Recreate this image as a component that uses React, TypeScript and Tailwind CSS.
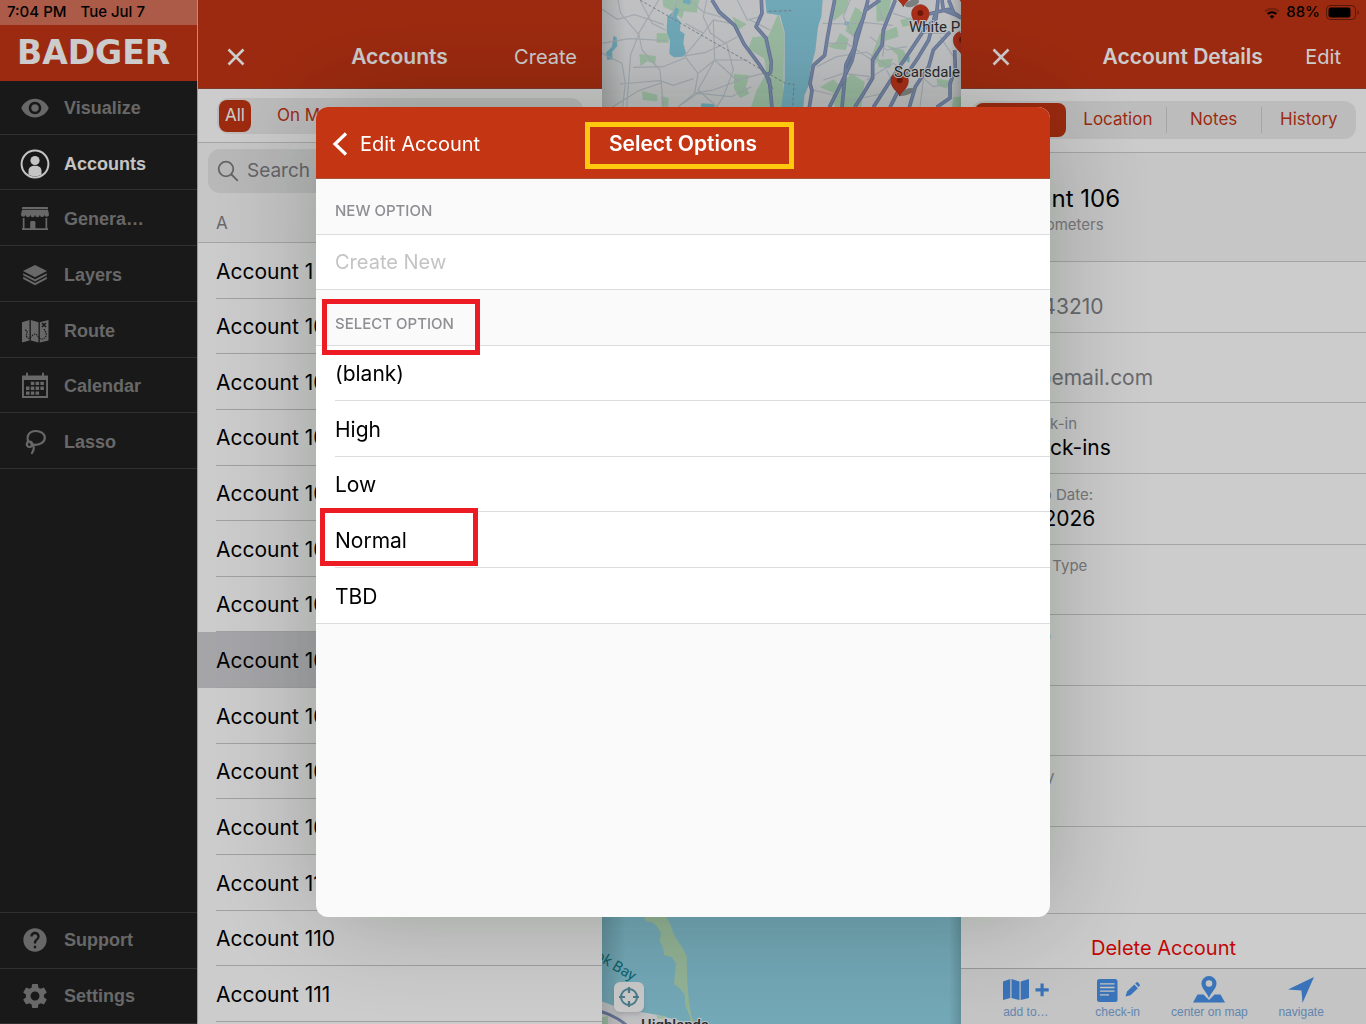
import React, { useState } from 'react';
import { clsx } from 'clsx';
import { MdHelp, MdSettings, MdVisibility } from 'react-icons/md';

type IconProps = { className?: string };

const PersonIcon = ({ className }: IconProps) => (
  <svg viewBox="0 0 30 30" className={className} fill="currentColor">
    <circle cx="15" cy="15" r="13.4" fill="none" stroke="currentColor" strokeWidth="2" />
    <circle cx="15" cy="11.5" r="4.6" />
    <path d="M8.5 25.500V22c0-3.400 2.600-5.200 6.500-5.200s6.500 1.800 6.500 5.200v3.500A12.500 12.500 0 0 1 8.500 25.500z" />
  </svg>
);

const StoreIcon = ({ className }: IconProps) => (
  <svg viewBox="0 0 30 30" className={className} fill="currentColor">
    <rect x="2" y="3" width="26" height="2.200" rx="0.500" />
    <path d="M2 6h26l1 4.300a2.300 2.300 0 0 1-4.600 0.500 2.300 2.300 0 0 1-4.600 0 2.300 2.300 0 0 1-4.800 0 2.300 2.300 0 0 1-4.700 0 2.300 2.300 0 0 1-4.700 0A2.300 2.300 0 0 1 1 10.300z" />
    <path d="M2.800 14h1.700v10.300h5.700v-5.800c0-1 .6-1.500 1.500-1.500h2.200c.9 0 1.500.5 1.500 1.500v5.800h10.100V14h1.700v10.300h0.800v1.700H2v-1.700h0.800z" />
  </svg>
);

const LayersIcon = ({ className }: IconProps) => (
  <svg viewBox="0 0 30 30" className={className} fill="currentColor">
    <path d="M15 5 27 11 15 17.300 3 11z" />
    <path d="M3.200 13.200 15 19.300l11.800-6.100v2.100L15 21.600 3.200 15.300z" />
    <path d="M3.200 16.800 15 23l11.800-6.200v2.100L15 25.200 3.200 18.900z" />
  </svg>
);

const RouteIcon = ({ className }: IconProps) => (
  <svg viewBox="0 0 30 30" className={className} fill="currentColor">
    <path d="M2 6.200 9.500 4v20.500L2 26.500zM10.800 4l7.700 2.300v20.200l-7.700-2zM19.800 6.300 28.500 4v20.500l-8.700 2z" />
    <g fill="none" stroke="#212121" strokeWidth="1.100">
      <path d="M5 14c4 .5 1 4 1.500 6s2.500 3.500 5 .5 4.500-3.500 6.500 0 6.500 3.500 8-.5c1-3-1-4.500-2-7" strokeDasharray="1.600 .8" />
      <path d="m22 7 4 4M26 7l-4 4" strokeWidth="1.600" />
    </g>
  </svg>
);

const CalendarIcon = ({ className }: IconProps) => (
  <svg viewBox="0 0 30 30" className={className} fill="currentColor">
    <path fillRule="evenodd" d="M2 4.500h26V27H2zM3.900 9v16.100h22.200V9z" />
    <rect x="6" y="1.500" width="2" height="4" rx="1" />
    <rect x="22" y="1.500" width="2" height="4" rx="1" />
    <path d="M10.800 10.800h3.500v3.300h-3.500zM15.600 10.800h3.500v3.300h-3.500zM20.400 10.800h3.500v3.300h-3.500zM6 15.600h3.500v3.300H6zM10.800 15.600h3.500v3.300h-3.500zM15.600 15.600h3.500v3.300h-3.500zM20.400 15.600h3.500v3.300h-3.500zM6 20.400h3.500v3.300H6zM10.800 20.400h3.500v3.300h-3.500zM15.600 20.400h3.500v3.300h-3.500z" />
  </svg>
);

const LassoIcon = ({ className }: IconProps) => (
  <svg viewBox="0 0 30 30" className={className} fill="none" stroke="currentColor" strokeWidth="2.200" strokeLinecap="round">
    <path d="M8.300 14.500C6 9 9.500 4 15.500 4c5.500 0 9.300 3 9.300 6.800 0 4.200-4.500 7-9.300 7-1.800 0-3.300-.4-4.500-1" />
    <circle cx="9.500" cy="17.300" r="2.700" />
    <path d="M13.200 18.800c1.200 2.200.4 4.700-1.200 7.200" />
  </svg>
);

const CloseIcon = () => (
  <svg viewBox="0 0 18 18" className="size-[18px]" fill="none" stroke="currentColor" strokeWidth="2.600">
    <path d="m1.500 1.500 15 15M16.500 1.500l-15 15" />
  </svg>
);

const topNav = [
  { label: 'Visualize', icon: MdVisibility },
  { label: 'Accounts', icon: PersonIcon },
  { label: 'Genera…', icon: StoreIcon },
  { label: 'Layers', icon: LayersIcon },
  { label: 'Route', icon: RouteIcon },
  { label: 'Calendar', icon: CalendarIcon },
  { label: 'Lasso', icon: LassoIcon },
];

const bottomNav = [
  { label: 'Support', icon: MdHelp },
  { label: 'Settings', icon: MdSettings },
];

const accounts = ['1', '100', '101', '102', '103', '104', '105', '106', '107', '108', '109', '11', '110', '111'];

const fields = [
  { label: 'Phone', value: '9876543210', muted: true },
  { label: 'Email', value: 'user1@email.com', muted: true },
  { label: 'Last Check-in', value: 'No check-ins' },
  { label: 'Follow-Up Date:', value: 'Jul 11, 2026' },
  { label: 'Customer Type', value: '' },
  { label: 'Client Info', value: '' },
  { label: 'Next Step', value: '' },
  { label: 'Status Key', value: '' },
];

const options = ['(blank)', 'High', 'Low', 'Normal', 'TBD'];

const NavItem = ({ label, icon: Icon, active }: { label: string; icon: React.ElementType; active?: boolean }) => (
  <li className="border-b border-[#3d3d3d]">
    <button className={clsx('flex h-full w-full items-center gap-3.5 pl-5 text-lg font-bold', active ? 'text-[#f5f5f5]' : 'text-[#828282]')}>
      <Icon className={clsx('size-[30px] shrink-0', Icon === MdHelp && 'p-px')} />
      {label}
    </button>
  </li>
);

const Sidebar = () => (
  <aside className="flex w-[197px] shrink-0 flex-col bg-[#202020] font-['Liberation_Sans',sans-serif]">
    <div className="relative z-10 h-[81px] shrink-0 bg-[#c43514]">
      <div className="flex h-[25px] items-center gap-3.5 bg-white/30 pl-[7px] font-['Inter',sans-serif] text-[15px] font-medium text-black">
        <span>7:04 PM</span>
        <span>Tue Jul 7</span>
      </div>
      <div className="pl-[17px] font-['DejaVu_Sans',sans-serif] text-[33px] leading-[56px] font-bold text-white">BADGER</div>
    </div>
    <ul className="-mt-0.5 grid h-[390px] shrink-0 grid-rows-7 *:pt-[3px]">
      {topNav.map((item) => (
        <NavItem key={item.label} {...item} active={item.label === 'Accounts'} />
      ))}
    </ul>
    <ul className="mt-auto grid h-28 shrink-0 grid-rows-2 border-t border-[#3d3d3d]">
      {bottomNav.map((item) => (
        <NavItem key={item.label} {...item} />
      ))}
    </ul>
  </aside>
);

const AccountList = () => {
  const [selected, setSelected] = useState('106');

  return (
    <section className="flex w-[405px] shrink-0 flex-col overflow-hidden border-l border-[#c0c0c0] bg-white">
      <header className="flex h-[89px] shrink-0 items-center justify-between border-b border-[#9c4a38] bg-[#c43514] pt-[26px] pr-[25px] pl-[29px] text-white">
        <button aria-label="Close" className="w-[70px]"><CloseIcon /></button>
        <h2 className="text-[21px] font-semibold">Accounts</h2>
        <button className="w-[75px] text-right text-xl">Create</button>
      </header>
      <div className="shrink-0 border-b border-[#cfcfcf] px-[19px] pt-[9px] pb-2">
        <div className="flex h-9 items-center rounded-xl bg-[#ececec] p-0.5 text-[17px] text-[#c43514]">
          <button className="h-8 w-8 rounded-lg bg-[#c43514] text-white">All</button>
          <button className="ml-[26px]">On Map</button>
        </div>
      </div>
      <div className="shrink-0 bg-[#f8f8f8]">
        <label className="mx-2.5 mt-1.5 flex h-11 items-center gap-2 rounded-xl bg-[#e6e6e7] pl-[9px] text-[#7f7f84]">
          <svg viewBox="0 0 22 22" className="size-[22px]" fill="none" stroke="currentColor" strokeWidth="1.800" strokeLinecap="round">
            <circle cx="9" cy="9" r="7.300" />
            <path d="m14.500 14.500 5.800 5.800" />
          </svg>
          <input type="search" aria-label="Search accounts" placeholder="Search Accounts" className="min-w-0 flex-1 bg-transparent text-[19px] outline-none placeholder:text-[#7f7f84]" />
        </label>
        <h3 className="mt-3 flex h-[38px] items-center border-b border-[#cfcfcf] pl-[18px] text-[17px] text-[#838387]">A</h3>
      </div>
      <ul className="grid h-[779px] shrink-0 grid-rows-14">
        {accounts.map((name) => (
          <li key={name} className={clsx('pl-[18px]', name === selected && 'bg-[#cfcfd3]')}>
            <button onClick={() => setSelected(name)} className="h-full w-full border-b border-[#c9c9cb] pt-0.5 text-left text-[21px]">
              Account {name}
            </button>
          </li>
        ))}
      </ul>
    </section>
  );
};

const MapPin = ({ x, y }: { x: number; y: number }) => (
  <g transform={`translate(${x} ${y})`}>
    <path d="M0 0c-4-14-26-22-26-46a26 26 0 0 1 52 0C26-22 4-14 0 0z" fill="#d43a1f" stroke="#b02a12" strokeWidth="2" />
    <circle cy="-47" r="9" fill="#8e1e0c" />
  </g>
);

const MapView = () => (
  <section className="relative min-w-0 flex-1 overflow-hidden bg-[#90d2e4]">
    <svg viewBox="0 0 359 1024" preserveAspectRatio="xMidYMid slice" className="h-full w-full font-['Roboto',sans-serif]">
      <rect width="359" height="500" fill="#f0f1f3" />
      <g transform="translate(-12 0) scale(.33333)">
        <g fill="#c0e8c8">
          <path d="M218 0h110l-8 38-38-4-6 22-30-24-26-12zM428 50l42 22-30 22zM565 40l18 60-4 222h-96l16-50 30-52-6-44-48-30 12-34 48-4z" />
          <path d="M200 100h36v28h-36zM148 162l50 6-2 24-24-8-20 14zM432 222l46 4-10 34 10 22-28 12-18-28zM156 274l46 10v20l-44-4zM214 288l22 6-2 28-20-4z" />
          <path d="M728 0h48l-8 34-38 30zM796 20l28 22-18 80-40-30zM858 0h46l-14 60-30 6zM712 138l26-12 12-26 26 16-8 34-34-4zM690 262l40-24 20 20 34-38 40 26-10 76h-80l-4-44zM840 180l30-80 50-20 6 30-52 16-10 60zM888 136l52 14 18 30-30 20-6-36zM862 180l46-4-8 28-34-4zM930 60l34-8 4 24-30 4zM1040 236l44 6-14 24-28-10zM1090 290h26v32h-30z" />
        </g>
        <g fill="#8cd2e6">
          <path d="M526 0h172l-4 50-10 30-8 72-16 60-2 40-14 32-4 38h-66l10-80V96l-14-50-40-6zM232 50l16-14 8-14 12 6-8 24 12 14-2 26 14 10-4 28 8 30-10 10-26 2-14-10 2-40-10-28zM280 0h24l-4 14-22-6zM70 108l10 4 2 26-16 18 2 22-16 2-4-22 18-18zM334 310l36 2 6 10h-44zM764 64l14 2-4 12-12-4zM950 168l10 2-2 18-8-4z" />
        </g>
        <g fill="none" stroke="#cbd4dc" strokeWidth="3.500">
          <path d="M36 28l46 30 52-14 88 30M36 130l80-14 114 6M36 160l60 30 10 60-8 72M84 0l8 40 54 64-24 60-12 158M150 0l36 70 40 20M206 0l-60 100 10 50 54 60 10 112M130 202l90-2 64-26M90 252l120-10 40 14 60-20M66 322l80-50 70-24" />
          <path d="M262 0l-20 60M286 70l54 30 30-40 52 10M340 100l-56 68 40 52-10 60-50 40M300 0l40 36 80 22M350 0l-10 50 22 50 44 30 36-20M284 168l60-10 66-30M370 60l4 120 100 0M324 220l50-40 66 60 80-20M374 180l-50 90 60 52M310 280l60-10 80-30M410 130l20 80-30 80-20 32M264 320l60-40 100 10 60-30" />
          <path d="M442 0l30 60 40-10M480 60l60 30M698 70l70 2 60-4 80 8M710 130l60 0 90 60M680 200l60-30 90-14 60 40M700 240l60-20 80 10M780 0l-20 50 30 60M868 30l20 50-10 90M840 110l50 40 60-10M910 40l60 20 30-30M830 240l80-50 60 40M890 210l40 80M1000 100l80 0M960 200l70 60 60-10M1000 240l-10 80M1050 110l40 60M670 270l120 30 90-20" />
        </g>
        <g fill="none" stroke="#7f90b8" strokeWidth="11" strokeLinejoin="round">
          <path d="M366 0l22 36 46 40 28 56 46 62 30 46 8 82M514 0l2 40-18 40 30 34 16 72-2 30-12 12 14 40" />
          <path d="M734 0l-12 60-10 54-8 52-34 30-10 54 6 22-8 50M834 0l-14 54-22 50-6 40-24 50-12 130M822 46l-22 76-14 60-38 80-30 60M916 0l-16 40-20 50-4 46-28 44v54l-26 44-28 44M870 0l-48 34" />
          <path d="M1000 94l-40 60-60 90-50 78M1036 40l-20 80-30 50-40 60-46 92M1080 96l-50 54-14 50-40 60-18 62M1094 150l2 60-16 40v44l-40 28M1044 0l-6 56-40 36M1056 0l4 30 40 16 14 8M1076 0l16 40M1016 42l60-14 40 26" />
        </g>
        <g fill="none" stroke="#90a4cb" strokeWidth="6" strokeLinejoin="round">
          <path d="M366 0l22 36 46 40 28 56 46 62 30 46 8 82M514 0l2 40-18 40 30 34 16 72-2 30-12 12 14 40" />
          <path d="M734 0l-12 60-10 54-8 52-34 30-10 54 6 22-8 50M834 0l-14 54-22 50-6 40-24 50-12 130M822 46l-22 76-14 60-38 80-30 60M916 0l-16 40-20 50-4 46-28 44v54l-26 44-28 44M870 0l-48 34" />
          <path d="M1000 94l-40 60-60 90-50 78M1036 40l-20 80-30 50-40 60-46 92M1080 96l-50 54-14 50-40 60-18 62M1094 150l2 60-16 40v44l-40 28M1044 0l-6 56-40 36M1056 0l4 30 40 16 14 8M1076 0l16 40M1016 42l60-14 40 26" />
        </g>
        <path d="M150 0l440 252h22l-4 70M536 34l68-2" fill="none" stroke="#8a9299" strokeWidth="2.500" strokeDasharray="9 6" />
        <ellipse cx="950" cy="276" rx="24" ry="9" fill="#9a9e9f" transform="rotate(-20 950 276)" />
        <ellipse cx="966" cy="10" rx="22" ry="10" fill="#9a9e9f" transform="rotate(-20 966 10)" />
        <MapPin x={940} y={20} />
        <MapPin x={991} y={86} />
        <MapPin x={1116} y={166} />
        <MapPin x={1116} y={10} />
        <MapPin x={929} y={288} />
      </g>
      <g fill="#2f3338" stroke="#f4f4f4" strokeWidth="2" paintOrder="stroke" fontSize="15">
        <text x="307" y="32">White Plains</text>
        <text x="292" y="77">Scarsdale</text>
      </g>
      <g transform="translate(-12 900) scale(.33333)">
        <path d="M162 48H228L242 76L252 104L276 142L290 168L292 250L297 305L304 345L312 368H300L301 352L286 318L284 284L268 264L252 252L258 190L246 172L222 166L220 146L210 124L212 98L200 78L184 66L166 64z" fill="#b8dfbb" />
        <path d="M30 302l50 18 60 14 60 10 60 16 50 12H30z" fill="#f0f1f3" />
        <path d="M36 352l18-4v24H36zM200 346l26 2 2 8-26 0z" fill="#c0e8c8" />
        <path d="M30 334q40 10 78 40" fill="none" stroke="#8090bb" strokeWidth="9" />
      </g>
      <text transform="translate(-15 954) rotate(31)" fontSize="15" fill="#157e8c">ook Bay</text>
      <text x="39" y="1030" fontSize="15" fontWeight="500" fill="#2f3338" stroke="#f4f4f4" strokeWidth="2" paintOrder="stroke">Highlands</text>
    </svg>
    <div className="absolute inset-y-0 left-0 w-6 bg-linear-to-r from-black/15 to-transparent" />
    <div className="absolute inset-y-0 right-0 w-3 bg-linear-to-l from-black/15 to-transparent" />
    <button aria-label="Center map" className="absolute bottom-3 left-3 flex size-[30px] items-center justify-center rounded-md bg-[#fafafa] text-[#5d99ad] shadow-md">
      <svg viewBox="0 0 20 20" className="size-5" fill="none" stroke="currentColor" strokeWidth="2">
        <circle cx="10" cy="10" r="8" />
        <path d="M10 0v6M10 14v6M0 10h6M14 10h6" strokeWidth="2.200" />
      </svg>
    </button>
  </section>
);

const StatusIcons = () => (
  <div className="flex h-[25px] items-center justify-end gap-1.5 pr-1.5 text-[15px] font-medium text-black">
    <svg viewBox="0 0 16 12" className="h-3 w-4" fill="none" stroke="currentColor" strokeWidth="2">
      <path d="M1 4.500a10 10 0 0 1 14 0" opacity=".25" />
      <path d="M3.600 7a6.300 6.300 0 0 1 8.800 0" />
      <path d="M8 11.800 5.700 9.300a3.400 3.400 0 0 1 4.600 0z" fill="currentColor" stroke="none" />
    </svg>
    <span>88%</span>
    <svg viewBox="0 0 34 15" className="h-[15px] w-[34px]">
      <rect x=".5" y=".5" width="29" height="14" rx="4" fill="none" stroke="#000" strokeOpacity=".45" />
      <rect x="2.500" y="2.500" width="22" height="10" rx="2.200" />
      <path d="M31.500 5.200v4.600c1.600-.8 1.600-3.800 0-4.600z" fillOpacity=".5" />
    </svg>
  </div>
);

const MapFold = () => (
  <path d="M0 4.500 7.300 2v19L0 23zM8.500 2l8 2.500V23l-8-2zM17.700 4.500 26 2v19l-8.300 2z" />
);

const toolbar = [
  {
    label: 'add to…',
    art: <svg viewBox="0 0 46 26" className="h-[26px] w-[46px]" fill="currentColor"><MapFold /><path d="M37.500 6.500h3.200v4.700h5v3.200h-5v4.800h-3.200v-4.800h-5v-3.200h5z" /></svg>,
  },
  {
    label: 'check-in',
    art: (
      <svg viewBox="0 0 44 26" className="h-[26px] w-11" fill="currentColor">
        <rect x="1" y="2" width="20.500" height="23" rx="2.500" />
        <path d="M4 6.800h14.500M4 10.500h14.500M4 14.200h14.500M4 17.900h9" stroke="#f5f5f5" strokeWidth="1.300" />
        <path d="M29.500 19.500 31 14.500l7.300-7 3.600 3.800-7.400 7zM39.200 6.500l1-.9c.7-.6 1.300-.5 1.900 0l1.400 1.600c.5.600.5 1.300 0 1.800l-.8.900z" />
      </svg>
    ),
  },
  {
    label: 'center on map',
    art: (
      <svg viewBox="0 0 32 27" className="h-[27px] w-8" fill="currentColor">
        <path fillRule="evenodd" d="M16 0a7.500 7.500 0 0 1 7.500 7.600c0 5-5 8.400-7.500 14.400-2.500-6-7.500-9.400-7.500-14.400A7.500 7.500 0 0 1 16 0zm0 4.200a3.300 3.300 0 1 0 0 6.600 3.300 3.300 0 0 0 0-6.600z" />
        <path d="M4.500 18.500h6l5.500 5.600 5.500-5.600h6l4.500 8H0z" />
      </svg>
    ),
  },
  {
    label: 'navigate',
    art: <svg viewBox="0 0 26 26" className="size-[26px]" fill="currentColor"><path d="M26 0 14.500 26l-1-12.500L0 12.500z" /></svg>,
  },
];

const AccountDetails = () => (
  <section className="flex w-[405px] shrink-0 flex-col bg-white">
    <header className="h-[89px] shrink-0 border-b border-[#9c4a38] bg-[#c43514] text-white">
      <StatusIcons />
      <div className="flex h-16 items-center justify-between pr-[25px] pl-[31px]">
        <button aria-label="Close"><CloseIcon /></button>
        <h2 className="pl-[50px] text-[21px] font-semibold">Account Details</h2>
        <button className="text-xl">Edit</button>
      </div>
    </header>
    <div className="shrink-0 border-b border-[#cfcfcf] px-2.5 pt-3 pb-[13px]">
      <div className="grid h-[38px] grid-cols-4 items-center rounded-xl bg-[#ececec] py-0.5 pl-1 text-[17px] text-[#c43514]">
        <button className="mr-1 h-[34px] rounded-lg bg-[#c43514] text-white">Details</button>
        <button>Location</button>
        <button className="border-l border-[#cfcfcf]">Notes</button>
        <button className="border-l border-[#cfcfcf]">History</button>
      </div>
    </div>
    <div className="h-[109px] shrink-0 border-b border-[#cfcfcf] bg-[#f8f8f8] pt-[30px] pl-[18px]">
      <h3 className="text-2xl leading-8">Account 106</h3>
      <p className="text-[15px] leading-5 text-[#97979b]">4120.5 kilometers</p>
    </div>
    <dl className="grid h-[565px] shrink-0 grid-rows-8">
      {fields.map((field) => (
        <div key={field.label} className="border-b border-[#cfcfcf] pt-[11px] pl-[18px]">
          <dt className="text-[15px] leading-5 text-[#97979b]">{field.label}</dt>
          <dd className={clsx('text-[21px] leading-7', field.muted && 'text-[#85858a]')}>{field.value}</dd>
        </div>
      ))}
    </dl>
    <div className="flex-1" />
    <button className="h-[55px] shrink-0 border-t border-[#cfcfcf] pt-3.5 text-xl text-[#f00a0a]">Delete Account</button>
    <nav className="grid h-14 shrink-0 grid-cols-4 border-t border-[#c0c0c0] bg-[#f5f5f5] px-[19px] text-[#4890e8]">
      {toolbar.map((item) => (
        <button key={item.label} className="flex flex-col items-center justify-center pt-0.5 whitespace-nowrap">
          <span className="flex h-7 items-center">{item.art}</span>
          <span className="font-['Liberation_Sans',sans-serif] text-xs text-[#7ba8dc]">{item.label}</span>
        </button>
      ))}
    </nav>
  </section>
);

const SelectOptionsModal = () => {
  const [newOption, setNewOption] = useState('');

  return (
    <div className="fixed inset-0 z-20 flex items-center justify-center bg-black/20">
      <div role="dialog" aria-labelledby="select-title" className="relative min-h-[810px] w-full max-w-[734px] rounded-xl bg-[#fafafa] shadow-[0_0_110px_rgba(0,20,0,0.25)]">
        <header className="flex h-[72px] items-center rounded-t-xl border-b border-[#a8543f] bg-[#c43514] px-4 pt-0.5 text-white">
          <button className="flex flex-1 items-center gap-3 text-xl">
            <svg viewBox="0 0 16 24" className="h-6 w-4" fill="none" stroke="currentColor" strokeWidth="3.200">
              <path d="M14 1.500 3 12l11 10.500" />
            </svg>
            Edit Account
          </button>
          <h1 id="select-title" className="text-[21px] font-semibold">Select Options</h1>
          <div className="flex-1" />
          <div className="pointer-events-none absolute top-[15px] left-[269px] h-[47px] w-[209px] border-5 border-[#ffc90e]" />
        </header>
        <label htmlFor="new-option" className="flex h-14 items-center border-b border-[#dcdcde] pt-2.5 pl-[19px] text-[15px] font-medium text-[#8e8e93]">
          NEW OPTION
        </label>
        <input
          id="new-option"
          value={newOption}
          onChange={(e) => setNewOption(e.target.value)}
          placeholder="Create New"
          className="block h-[55px] w-full border-b border-[#dcdcde] bg-white px-[19px] text-xl outline-none placeholder:text-[#c4c4c6]"
        />
        <h2 className="relative flex h-14 items-center border-b border-[#dcdcde] pt-3.5 pl-[19px] text-[15px] font-medium text-[#8e8e93]">
          SELECT OPTION
          <span className="pointer-events-none absolute top-[9px] left-1.5 z-10 h-14 w-[158px] border-5 border-[#ed1c24]" />
        </h2>
        <ul className="grid h-[278px] grid-rows-5 border-b border-[#dcdcde] bg-white">
          {options.map((option) => (
            <li key={option} className="relative pl-[19px]">
              <button className={clsx('h-full w-full pt-0.5 text-left text-[21px]', option !== 'TBD' && 'border-b border-[#dcdcde]')}>
                {option}
              </button>
              {option === 'Normal' && (
                <span className="pointer-events-none absolute -top-1 left-1 z-10 h-[58px] w-[158px] border-5 border-[#ed1c24]" />
              )}
            </li>
          ))}
        </ul>
      </div>
    </div>
  );
};

const App: React.FC = () => (
  <main className="flex h-screen min-w-[1100px] overflow-hidden bg-white font-['Inter',sans-serif] text-black">
    <Sidebar />
    <AccountList />
    <MapView />
    <AccountDetails />
    <SelectOptionsModal />
  </main>
);

export default App;
